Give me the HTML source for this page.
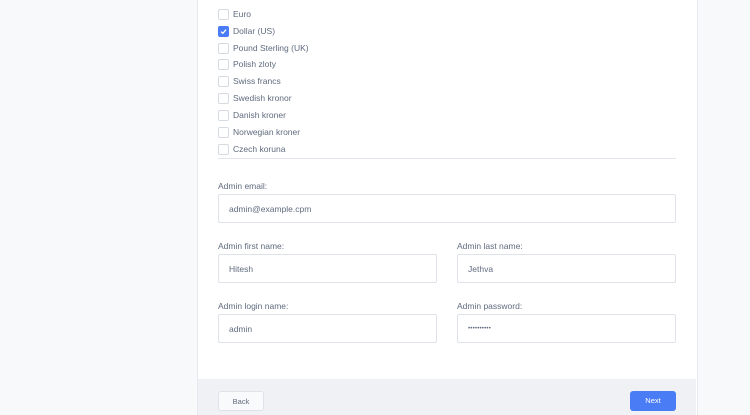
<!DOCTYPE html>
<html><head><style>
body{margin:0;width:750px;height:415px;background:#f8f9fb;font-family:"Liberation Sans",sans-serif;color:#5a6478;overflow:hidden;position:relative}
.card{position:absolute;left:197px;top:0;width:499px;height:415px;background:#fff;border-left:1px solid #e6e9ee;border-right:1px solid #e6e9ee}
.cb{position:absolute;left:218px;width:9px;height:9px;border:1px solid #d6dae1;border-radius:2px;background:#fff}
.cb.on{background:#4a7cf6;border-color:#4a7cf6}
.lt{position:absolute;left:233px;font-size:8.5px;color:#5f6b7e}
.lbl{position:absolute;font-size:8.5px;color:#5f6b7e}
.in{position:absolute;height:29px;border:1px solid #dfe3e9;border-radius:2px;box-sizing:border-box;font-size:8.5px;color:#5f6b7e;padding-left:10px;line-height:29px;background:#fff}
.foot{position:absolute;left:198px;top:379px;width:498px;height:36px;background:#eff1f5}
.btn{position:absolute;top:391px;height:20px;width:46px;border-radius:3px;font-size:7.5px;text-align:center;line-height:20px;box-sizing:border-box}
</style></head><body>
<div class="card"></div>
<div class="cb" style="top:9px"></div><div class="lt" style="top:9px">Euro</div>
<div class="cb on" style="top:26px"><svg width="9" height="9" viewBox="0 0 9 9" style="position:absolute;left:0;top:0"><path d="M2 4.7L3.8 6.3L7 2.7" stroke="#fff" stroke-width="1.3" fill="none"/></svg></div><div class="lt" style="top:26px">Dollar (US)</div>
<div class="cb" style="top:43px"></div><div class="lt" style="top:43px">Pound Sterling (UK)</div>
<div class="cb" style="top:59px"></div><div class="lt" style="top:59px">Polish zloty</div>
<div class="cb" style="top:76px"></div><div class="lt" style="top:76px">Swiss francs</div>
<div class="cb" style="top:93px"></div><div class="lt" style="top:93px">Swedish kronor</div>
<div class="cb" style="top:110px"></div><div class="lt" style="top:110px">Danish kroner</div>
<div class="cb" style="top:127px"></div><div class="lt" style="top:127px">Norwegian kroner</div>
<div class="cb" style="top:144px"></div><div class="lt" style="top:144px">Czech koruna</div>
<div style="position:absolute;left:218px;top:158px;width:458px;height:1px;background:#e3e6eb"></div>
<div class="lbl" style="left:218px;top:181px">Admin email:</div>
<div class="in" style="left:218px;top:194px;width:458px">admin@example.cpm</div>
<div class="lbl" style="left:218px;top:241px">Admin first name:</div>
<div class="lbl" style="left:457px;top:241px">Admin last name:</div>
<div class="in" style="left:218px;top:254px;width:219px">Hitesh</div>
<div class="in" style="left:457px;top:254px;width:219px">Jethva</div>
<div class="lbl" style="left:218px;top:301px">Admin login name:</div>
<div class="lbl" style="left:457px;top:301px">Admin password:</div>
<div class="in" style="left:218px;top:314px;width:219px">admin</div>
<div class="in" style="left:457px;top:314px;width:219px;font-size:6px;letter-spacing:0.2px">••••••••••</div>
<div class="foot"></div>
<div class="btn" style="left:218px;background:#f9fafb;border:1px solid #dfe3e9;color:#5f6b7e">Back</div>
<div class="btn" style="left:630px;background:#4a7cf6;color:#fff">Next</div>
</body></html>
